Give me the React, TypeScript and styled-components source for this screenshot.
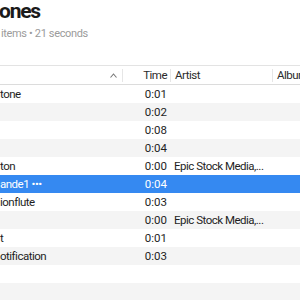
import React from 'react';
import styled, { createGlobalStyle } from 'styled-components';

const GlobalStyle = createGlobalStyle`
    html, body {
        margin: 0;
        padding: 0;
        background: #ffffff;
        overflow: hidden;
    }
    body {
        font-family: Roboto, 'Liberation Sans', sans-serif;
        -webkit-font-smoothing: antialiased;
    }
`;

const Page = styled.div`
    width: 300px;
    height: 300px;
    overflow: hidden;
    background: #ffffff;
`;

const Heading = styled.div`
    height: 65px;
`;

const Title = styled.div`
    font-size: 21px;
    line-height: 22px;
    font-weight: 700;
    color: #1a1a1a;
    margin-left: -1px;
    letter-spacing: -1.2px;
`;

const Subtitle = styled.div`
    margin-top: 5px;
    font-size: 11px;
    line-height: 13px;
    color: #9b9b9b;
    margin-left: 1px;
    letter-spacing: -0.35px;
`;

const Table = styled.div`
    border-top: 1px solid #e3e3e3;
`;

const Cols = `
    display: grid;
    grid-template-columns: 122px 48px 102px 1fr;
    height: 18px;
    align-items: center;
    font-size: 11.5px;
`;

const HeaderRow = styled.div`
    ${Cols}
    border-bottom: 1px solid #dcdcdc;
    color: #2b2b2b;
`;

const HeaderCell = styled.div<{ $right?: boolean; $sep?: boolean }>`
    height: 13px;
    line-height: 13px;
    display: flex;
    align-items: center;
    justify-content: ${(p) => (p.$right ? 'flex-end' : 'space-between')};
    padding: 0 ${(p) => (p.$right ? '3px' : '4px')} 0 4px;
    border-left: ${(p) => (p.$sep ? '1px solid #e6e6e6' : 'none')};
    white-space: nowrap;
    overflow: hidden;
    letter-spacing: -0.5px;
`;

const Caret = styled.svg`
    width: 7px;
    height: 5px;
    margin-right: 1px;
`;

const Row = styled.div<{ $striped: boolean; $selected?: boolean }>`
    ${Cols}
    background: ${(p) => (p.$selected ? '#3589f1' : p.$striped ? '#f4f4f4' : '#ffffff')};
    color: ${(p) => (p.$selected ? '#ffffff' : '#1e1e1e')};
`;

const Cell = styled.div<{ $right?: boolean; $pad?: number }>`
    white-space: nowrap;
    overflow: hidden;
    text-overflow: ellipsis;
    text-align: ${(p) => (p.$right ? 'right' : 'left')};
    padding-left: ${(p) => p.$pad ?? 4}px;
    padding-right: ${(p) => (p.$right ? 3 : 0)}px;
    letter-spacing: ${(p) => (p.$right ? '0' : '-0.5px')};
`;

type Track = { name: string; time: string; artist?: string };

const tracks: Track[] = [
    { name: 'tone', time: '0:01' },
    { name: '', time: '0:02' },
    { name: '', time: '0:08' },
    { name: '', time: '0:04' },
    { name: 'ton', time: '0:00', artist: 'Epic Stock Media,...' },
    { name: 'ande1 \u2022\u2022\u2022', time: '0:04' },
    { name: 'ionflute', time: '0:03' },
    { name: '', time: '0:00', artist: 'Epic Stock Media,...' },
    { name: 't', time: '0:01' },
    { name: 'otification', time: '0:03' },
    { name: '', time: '' },
    { name: '', time: '' },
];

export default function App() {
    return (
        <Page>
            <GlobalStyle />
            <Heading>
                <Title>ones</Title>
                <Subtitle>items &bull; 21 seconds</Subtitle>
            </Heading>
            <Table>
                <HeaderRow>
                    <HeaderCell>
                        <span />
                        <Caret viewBox="0 0 7 5">
                            <path d="M0.5 4.5 L3.5 1 L6.5 4.5" fill="none" stroke="#777" strokeWidth="1.1" />
                        </Caret>
                    </HeaderCell>
                    <HeaderCell $right $sep>Time</HeaderCell>
                    <HeaderCell $sep>Artist</HeaderCell>
                    <HeaderCell $sep>Album</HeaderCell>
                </HeaderRow>
                {tracks.map((t, i) => (
                    <Row key={i} $striped={i % 2 === 1} $selected={i === 5}>
                        <Cell $pad={0}>{t.name}</Cell>
                        <Cell $right>{t.time}</Cell>
                        <Cell>{t.artist}</Cell>
                        <Cell />
                    </Row>
                ))}
            </Table>
        </Page>
    );
}
